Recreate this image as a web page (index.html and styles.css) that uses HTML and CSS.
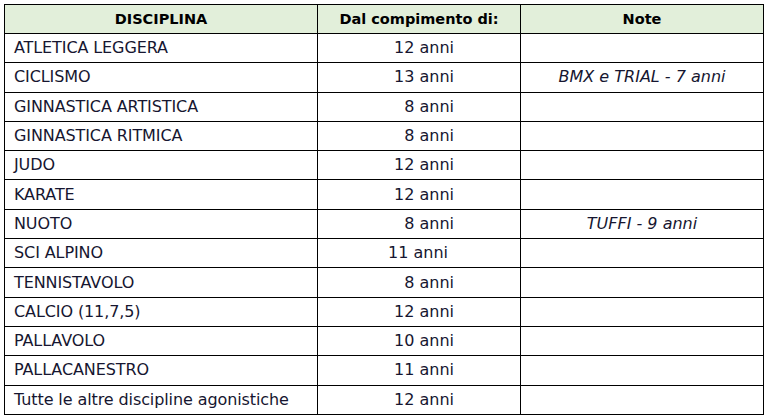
FILE: index.html
```html
<!DOCTYPE html>
<html lang="it">
<head>
<meta charset="utf-8">
<title>Discipline</title>
<link rel="stylesheet" href="styles.css">
</head>
<body>
<div class="page">
<table class="tbl">
  <colgroup>
    <col class="c1"><col class="c2"><col class="c3">
  </colgroup>
  <thead>
    <tr class="head">
      <th>DISCIPLINA</th>
      <th>Dal compimento di:</th>
      <th>Note</th>
    </tr>
  </thead>
  <tbody>
    <tr><td class="name">ATLETICA LEGGERA</td><td class="age">12 anni</td><td class="note"></td></tr>
    <tr><td class="name">CICLISMO</td><td class="age">13 anni</td><td class="note">BMX e TRIAL - 7 anni</td></tr>
    <tr><td class="name">GINNASTICA ARTISTICA</td><td class="age">8 anni</td><td class="note"></td></tr>
    <tr><td class="name">GINNASTICA RITMICA</td><td class="age">8 anni</td><td class="note"></td></tr>
    <tr><td class="name">JUDO</td><td class="age">12 anni</td><td class="note"></td></tr>
    <tr><td class="name">KARATE</td><td class="age">12 anni</td><td class="note"></td></tr>
    <tr><td class="name">NUOTO</td><td class="age">8 anni</td><td class="note">TUFFI - 9 anni</td></tr>
    <tr><td class="name">SCI ALPINO</td><td class="age shift">11 anni</td><td class="note"></td></tr>
    <tr><td class="name">TENNISTAVOLO</td><td class="age">8 anni</td><td class="note"></td></tr>
    <tr><td class="name">CALCIO (11,7,5)</td><td class="age">12 anni</td><td class="note"></td></tr>
    <tr><td class="name">PALLAVOLO</td><td class="age">10 anni</td><td class="note"></td></tr>
    <tr><td class="name">PALLACANESTRO</td><td class="age">11 anni</td><td class="note"></td></tr>
    <tr><td class="name">Tutte le altre discipline agonistiche</td><td class="age">12 anni</td><td class="note"></td></tr>
  </tbody>
</table>
</div>
</body>
</html>
```

FILE: styles.css
```css
html, body {
  margin: 0;
  padding: 0;
  background: #ffffff;
}

.page {
  padding: 4px 0 0 4px;
}

.tbl {
  border-collapse: collapse;
  table-layout: fixed;
  width: 759px;
  font-family: "DejaVu Sans", "Noto Sans", sans-serif;
  font-size: 16px;
  color: #161630;
}

.c1 { width: 313px; }
.c2 { width: 203px; }
.c3 { width: 243px; }

.tbl th,
.tbl td {
  border: 1px solid #000;
  padding: 0;
  height: 28.3px;
  line-height: 18px;
  white-space: nowrap;
  overflow: hidden;
}

.head th {
  background: #e2efda;
  font-weight: bold;
  font-size: 14.5px;
  color: #000;
  text-align: center;
  height: 28px;
}

.name {
  text-align: left;
  padding-left: 9px !important;
  letter-spacing: -0.1px;
}

.age {
  text-align: right;
  padding-right: 66px !important;
}

.age.shift {
  padding-right: 72px !important;
}

.note {
  text-align: center;
  font-style: italic;
}
```
